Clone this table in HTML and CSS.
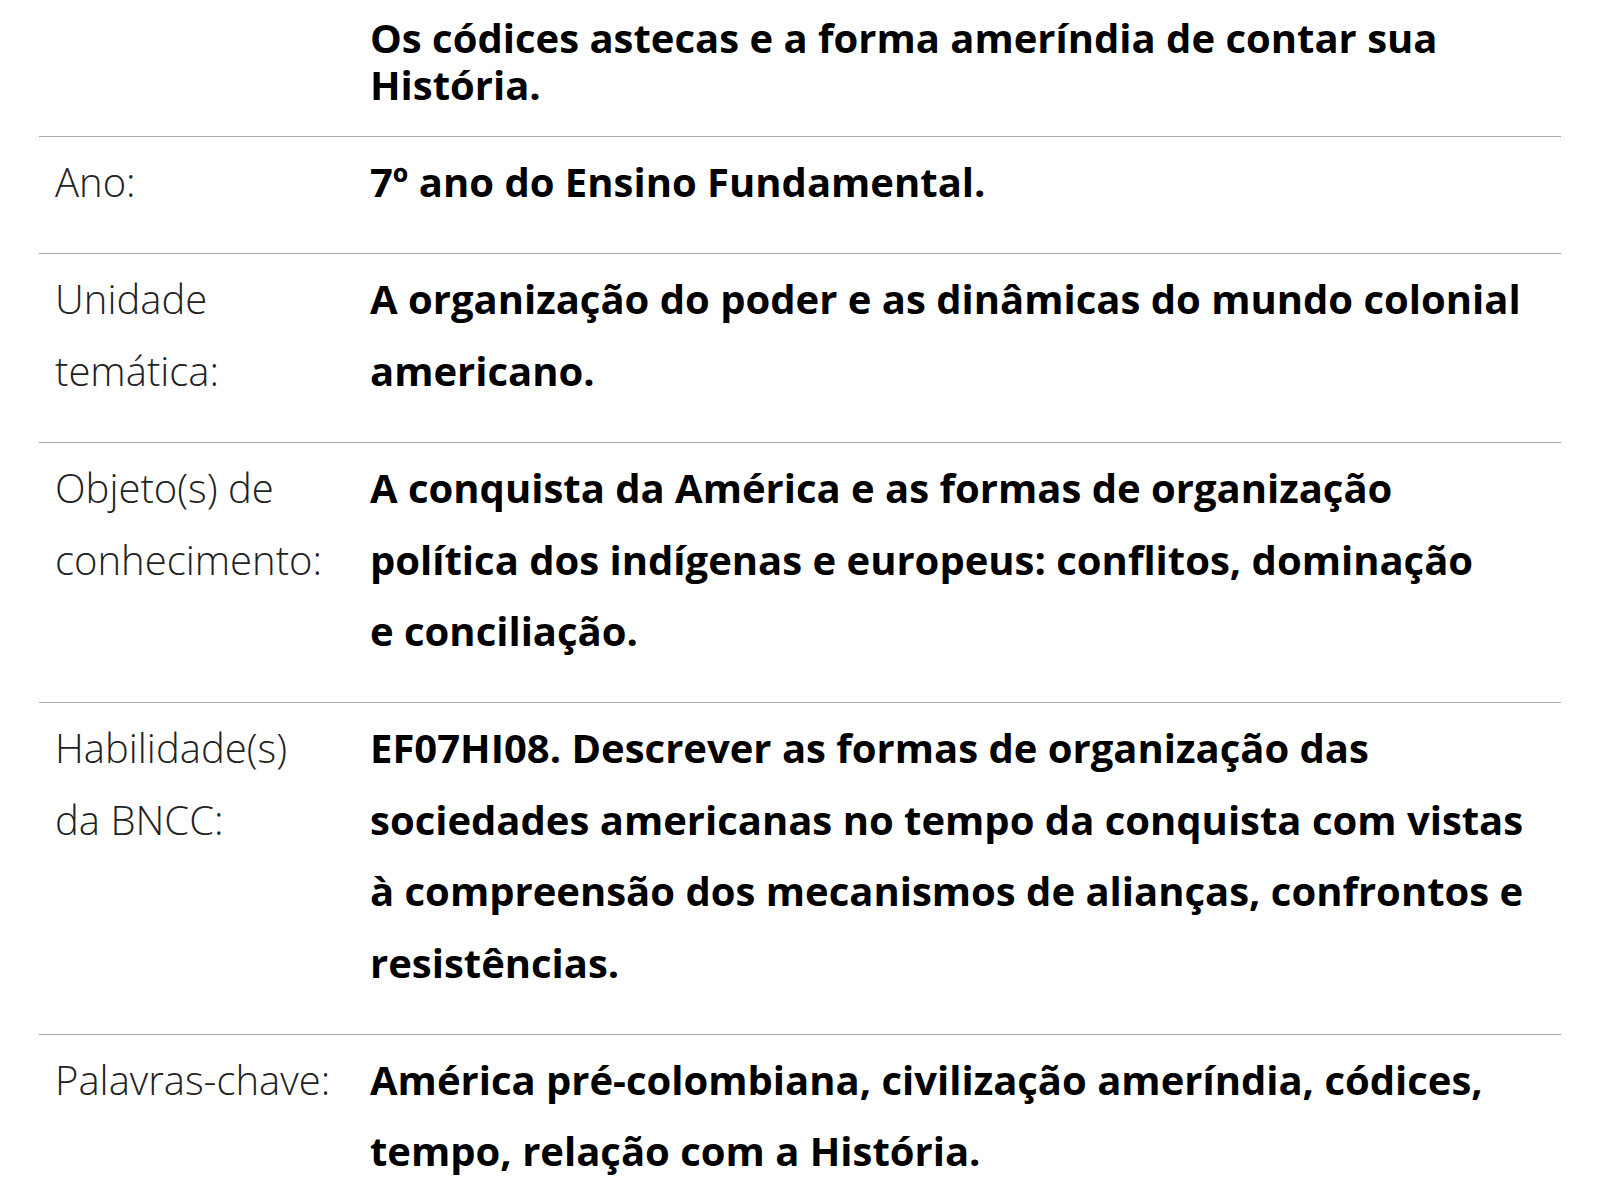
FILE: index.html
```html
<!DOCTYPE html>
<html lang="pt-BR">
<head>
    <meta charset="UTF-8">
    <meta name="viewport" content="width=device-width, initial-scale=1.0">
    <title>Plano de aula - Os códices astecas</title>
    <link rel="stylesheet" href="styles.css">
</head>
<body>
    <div class="ficha">
        <div class="linha topo">
            <div class="rotulo"></div>
            <div class="valor">Os códices astecas e a forma ameríndia de contar sua História.</div>
        </div>
        <div class="linha">
            <div class="rotulo">Ano:</div>
            <div class="valor">7º ano do Ensino Fundamental.</div>
        </div>
        <div class="linha">
            <div class="rotulo">Unidade temática:</div>
            <div class="valor">A organização do poder e as dinâmicas do mundo colonial americano.</div>
        </div>
        <div class="linha">
            <div class="rotulo">Objeto(s) de conhecimento:</div>
            <div class="valor">A conquista da América e as formas de organização política dos indígenas e europeus: conflitos, dominação e&nbsp;conciliação.</div>
        </div>
        <div class="linha">
            <div class="rotulo">Habilidade(s) da BNCC:</div>
            <div class="valor">EF07HI08. Descrever as formas de organização das sociedades americanas no tempo da conquista com vistas à compreensão dos mecanismos de alianças, confrontos e resistências.</div>
        </div>
        <div class="linha">
            <div class="rotulo">Palavras-chave:</div>
            <div class="valor">América pré-colombiana, civilização ameríndia, códices, tempo, relação com a História.</div>
        </div>
    </div>
</body>
</html>
```

FILE: styles.css
```css
body {
    margin: 0;
    background: #fff;
    font-family: "Open Sans", "Noto Sans", sans-serif;
    font-size: 40px;
    color: #000;
}
.ficha {
    margin: 0 39px;
}
.linha {
    display: grid;
    grid-template-columns: 331px 1fr;
    border-top: 1px solid #aaa;
    padding: 9px 0 36px;
    line-height: 71.4px;
}
.linha.topo {
    border-top: none;
    padding: 14px 0 28px;
    line-height: 47px;
}
.rotulo {
    padding-left: 16px;
    padding-right: 35px;
    font-weight: 300;
    color: #222;
}
.valor {
    font-weight: 700;
    padding-right: 30px;
}
```
